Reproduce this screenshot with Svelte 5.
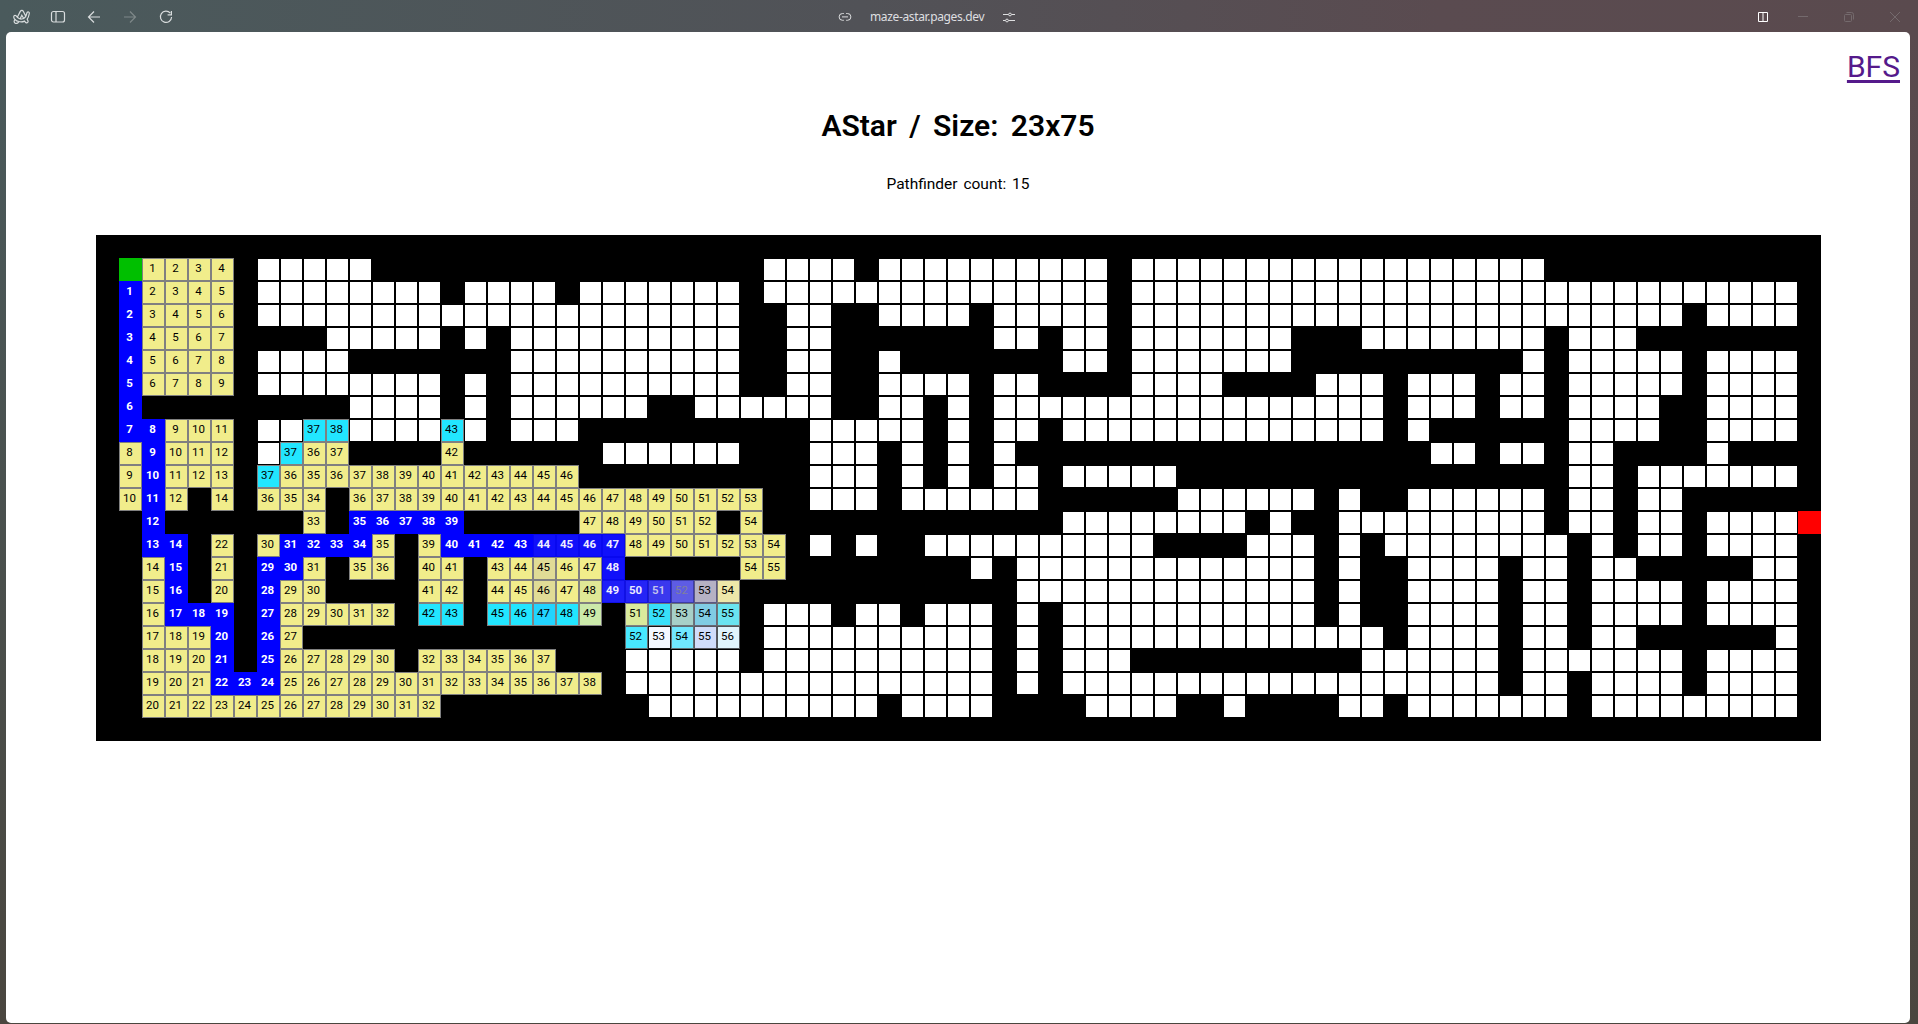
<script>
  // Each row lists runs as "column:content".
  // oN = N open cells, g = start, x = goal, plain numbers = visited distances,
  // b = current path, c = frontier. "a~b" expands to a consecutive range.
  const rows = [
    '',
    '1:g 2:1~4 7:o5 29:o4 34:o10 45:o18',
    '1:b1 2:2~5 7:o8 16:o4 21:o7 29:o15 45:o29',
    '1:b2 2:3~6 7:o21 30:o2 34:o4 39:o5 45:o24 70:o4',
    '1:b3 2:4~7 10:o5 16:o1 18:o10 30:o2 39:o2 42:o2 45:o7 55:o8 64:o3',
    '1:b4 2:5~8 7:o4 18:o10 30:o2 34:o1 42:o2 45:o7 62:o1 64:o5 70:o4',
    '1:b5 2:6~9 7:o8 16:o1 18:o10 30:o2 34:o4 39:o2 45:o4 53:o3 57:o3 61:o2 64:o5 70:o4',
    '1:b6 11:o4 16:o1 18:o6 26:o6 34:o2 37:o1 39:o17 57:o3 61:o2 64:o4 70:o4',
    '1:b7~8 3:9~11 7:o2 9:c37~38 11:o4 15:c43 16:o1 18:o3 31:o5 37:o1 39:o2 42:o14 57:o1 64:o4 70:o4',
    '1:8 2:b9 3:10~12 7:o1 8:c37 9:36~37 15:42 22:o6 31:o3 35:o1 37:o1 39:o1 58:o2 61:o2 64:o2 70:o1',
    '1:9 2:b10 3:11~13 7:c37 8:36 9:35~46 31:o3 35:o1 37:o1 39:o2 42:o5 64:o2 67:o7',
    '1:10 2:b11 3:12 5:14 7:36 8:35 9:34 11:36~53 31:o3 35:o6 47:o6 54:o1 57:o6 64:o2 67:o2',
    '2:b12 9:33 11:b35~39 21:47~52 28:54 42:o8 51:o1 54:o9 64:o2 67:o2 70:o4 74:x',
    '2:b13~14 5:22 7:30 8:b31~34 12:35 14:39 15:b40~47 23:48~54 31:o1 33:o1 36:o10 50:o3 54:o1 56:o8 65:o1 67:o2 70:o4',
    '2:14 3:b15 5:21 7:b29~30 9:31 11:35~36 14:40~41 17:43~47 22:b48 28:54~55 38:o1 40:o13 54:o1 57:o4 62:o2 65:o2 72:o2',
    '2:15 3:b16 5:20 7:b28 8:29~30 14:41~42 17:44~48 22:b49~52 26:53~54 40:o13 54:o1 57:o4 62:o2 65:o4 70:o4',
    '2:16 3:b17~19 7:b27 8:28~32 14:c42~43 17:c45~48 21:49 23:51 24:c52~55 29:o3 33:o2 36:o3 40:o1 42:o11 54:o1 57:o4 62:o2 65:o4 70:o4',
    '2:17~19 5:b20 7:b26 8:27 23:c52~56 29:o10 40:o1 42:o14 57:o4 62:o2 65:o2 73:o1',
    '2:18~20 5:b21 7:b25 8:26~30 14:32~37 23:o5 29:o10 40:o1 42:o3 55:o6 62:o7 70:o4',
    '2:19~21 5:b22~24 8:25~38 23:o16 40:o1 42:o19 62:o2 65:o4 70:o4',
    '2:20~32 24:o10 35:o4 43:o4 49:o1 54:o2 57:o7 65:o9',
    ''
  ];

  // Cells caught halfway through their colour transition, keyed by "row,column".
  const fading = {
    '14,19': 'f1', '15,19': 'f1', '16,19': 'f2', '15,21': 'f3', '16,21': 'f4',
    '13,19': 'p0', '13,20': 'p0', '13,21': 'p0', '13,22': 'p0', '14,22': 'p0',
    '15,22': 'p1', '15,23': 'p2', '15,24': 'p3', '15,25': 'p4', '15,26': 'p5', '15,27': 'p6',
    '16,23': 'q1', '16,24': 'q2', '16,25': 'q3', '16,26': 'q4', '16,27': 'q5',
    '17,23': 'r1', '17,24': 'r2', '17,25': 'r3', '17,26': 'r4', '17,27': 'r5'
  };
  const kinds = { b: 'path', c: 'frontier' };

  function expand(spec, r) {
    const line = Array.from({ length: 75 }, () => ({ kind: 'wall', text: '' }));
    for (const part of spec.split(' ').filter(Boolean)) {
      const [at, body] = part.split(':');
      let c = +at;
      if (body === 'g') line[c].kind = 'start';
      else if (body === 'x') line[c].kind = 'goal';
      else if (body[0] === 'o') {
        for (let n = +body.slice(1); n > 0; n--) line[c++].kind = 'open';
      } else {
        const kind = kinds[body[0]] ?? 'seen';
        const [from, to] = body.replace(/^[bc]/, '').split('~').map(Number);
        for (let v = from; v <= (to ?? from); v++) line[c++] = { kind, text: v };
      }
    }
    return line.map((cell, c) => ({ ...cell, fade: fading[`${r},${c}`] ?? '' }));
  }

  const cells = rows.flatMap(expand);
</script>

<div class="window">
  <header class="bar">
    <div class="left">
      <svg width="18" height="16" viewBox="0 0 18 16"><path d="M2.2 14.2C.6 13.3 1 11.7 2 10.500C.6 9.200.3 7.200 1.500 6.500C2.900 5.800 3.600 7.200 4.300 8.200L7.300 2.400C8 .9 9.700.9 10.400 2.400L12.800 7.300C13.400 5.900 13.700 4.300 14.200 3.300C14.900 2.300 16.600 3 16.300 4.500C15.900 6.800 15.200 8.700 14.200 10.200L15 12C15.500 13.600 13.300 14.600 12.300 13.100L11.500 12.100C9.700 13 7.600 13.100 5.800 12.500C5.200 13.900 3.800 15 2.200 14.200ZM2 10.500C3 11.500 4.300 12.200 5.800 12.500M4.300 8.200C6.900 11.200 10.800 10.300 12.800 7.300M7.200 9.700L8.800 6.200L10.600 9.200"/></svg>
      <svg width="16" height="14" viewBox="0 0 16 14"><rect x="1.500" y="1.500" width="13" height="10.500" rx="2"/><path d="M6 1.500V12"/></svg>
      <svg width="14" height="14" viewBox="0 0 14 14"><path d="M13 7H1.500M7 1.500L1.500 7L7 12.500"/></svg>
      <svg class="dim" width="14" height="14" viewBox="0 0 14 14"><path d="M1 7H12.500M7 1.500L12.500 7L7 12.500"/></svg>
      <svg width="14" height="14" viewBox="0 0 14 14"><path d="M12.600 7A5.600 5.600 0 1 1 11.300 3.200M12.400 1V4.800H8.600"/></svg>
    </div>
    <div class="address">
      <svg width="14" height="10" viewBox="0 0 14 10"><path d="M5.800 1.500H4.500a3.300 3.300 0 0 0 0 6.800H5.800M8.200 1.500H9.500a3.300 3.300 0 0 1 0 6.800H8.200M4 4.900H10"/></svg>
      <span>maze-astar.pages.dev</span>
      <svg width="14" height="12" viewBox="0 0 14 12"><path d="M1 3.500H6.500M9.500 3.500H13M1 9.500H3.500M6.500 9.500H13"/><circle cx="8" cy="3.500" r="1.400"/><circle cx="5" cy="9.500" r="1.400"/></svg>
    </div>
    <div class="right">
      <svg class="split" width="10" height="10" viewBox="0 0 10 10"><path d="M.5.5H9.500V9.500H.5ZM5 .5V9.500"/></svg>
      <svg class="ctl" width="10" height="10" viewBox="0 0 10 10"><path d="M0 4.500H10"/></svg>
      <svg class="ctl" width="10" height="10" viewBox="0 0 10 10"><rect x=".5" y="2.500" width="7" height="7" rx="1"/><path d="M2.500.5H7.500Q9.500.5 9.500 2.500V7.500"/></svg>
      <svg class="ctl" width="10" height="10" viewBox="0 0 10 10"><path d="M0 0L10 10M10 0L0 10"/></svg>
    </div>
  </header>
  <main class="page">
    <nav><a href="#bfs">BFS</a></nav>
    <h1>AStar / Size: 23x75</h1>
    <p>Pathfinder count: 15</p>
    <div class="maze">
      {#each cells as cell}
        <div class="cell {cell.kind} {cell.fade}">{cell.text}</div>
      {/each}
    </div>
  </main>
</div>

<style>
  .window {
    box-sizing: border-box;
    height: 1024px;
    padding-bottom: 1px;
    display: flex;
    flex-direction: column;
    overflow: hidden;
    background:
      linear-gradient(to bottom, transparent 3%, #4a463f 100%),
      linear-gradient(to right, #4a5a5c 0%, #515257 45%, #5a4b50 75%, #5a4a4e 100%);
    font-family: Roboto, 'Noto Sans', sans-serif;
  }
  .bar {
    height: 32px;
    flex: none;
    display: grid;
    grid-template-columns: 838px auto 1fr;
    align-items: center;
    padding-top: 1px;
    box-sizing: border-box;
    color: #d8dcdd;
  }
  svg {
    fill: none;
    stroke: currentColor;
    stroke-width: 1.2;
    display: block;
  }
  .left {
    display: grid;
    grid-template-columns: repeat(5, 36px);
    place-items: center;
    padding-left: 4px;
  }
  .left .dim {
    color: #7f8889;
  }
  .address {
    display: flex;
    align-items: center;
    gap: 18px;
    font: 12px/16px 'Noto Sans', sans-serif;
    letter-spacing: -0.35px;
    color: #dedfe0;
  }
  .address svg {
    stroke-width: 1;
  }
  .right {
    display: grid;
    grid-template-columns: 34px repeat(3, 46px);
    justify-content: end;
    place-items: center;
  }
  .right svg {
    stroke-width: 1;
  }
  .split {
    color: #fff;
  }
  .ctl {
    color: #746a6d;
  }
  .page {
    flex: 1;
    margin: 0 8px 0 6px;
    display: flex;
    flex-direction: column;
    align-items: center;
    background: #fff;
    border-radius: 5px;
    color: #000;
  }
  nav {
    align-self: flex-end;
    height: 60px;
    padding: 13px 10px 0 0;
    box-sizing: border-box;
  }
  a {
    font-size: 30px;
    line-height: 44px;
    color: #551a8b;
    text-decoration: underline;
    text-decoration-thickness: 3px;
    text-underline-offset: 3px;
  }
  h1 {
    margin: 14px 0 0;
    font-size: 30px;
    line-height: 40px;
    font-weight: 600;
    word-spacing: 5px;
  }
  p {
    margin: 26px 0 0;
    font-size: 15.5px;
    line-height: 24px;
    word-spacing: 2px;
  }
  .maze {
    margin-top: 39px;
    display: grid;
    grid-template-columns: repeat(75, 23px);
    grid-auto-rows: 23px;
    background: #000;
  }
  .cell {
    box-sizing: border-box;
    border: 1px solid #000;
    text-align: center;
    font-size: 11.5px;
    line-height: 19px;
    padding-right: 1px;
  }
  .open { background: #fff; }
  .start { background: #00bf00; border-color: #00bf00; }
  .goal { background: #f00; border-color: #f00; }
  .seen { background: #f1ed8b; border-color: #808080; }
  .frontier { background: #22e6ff; border-color: #808080; }
  .path { background: #00f; border-color: #00f; color: #fff; font-weight: 700; }

  .f1 { background: #e0dc96; }
  .f2 { background: #22d4ff; }
  .f3 { background: #e0e896; }
  .f4 { background: #cceaaa; }
  .p0 { background: #1010fa; border-color: #0808f0; color: #eeeeff; }
  .p1 { background: #1e1ef8; border-color: #1010e8; color: #eeeeff; }
  .p2 { background: #2424f6; border-color: #1212e0; color: #e8e8ff; }
  .p3 { background: #3a38ee; border-color: #2020c8; color: #c4c4ec; font-weight: 600; }
  .p4 { background: #5e5ce4; border-color: #3c3ca8; color: #80809c; font-weight: 400; }
  .p5 { background: #b5b1c4; border-color: #5c5884; }
  .p6 { background: #ede7a9; border-color: #7c7a76; }
  .q1 { background: #d9ea9c; }
  .q2 { background: #38e0fa; border-color: #70787c; }
  .q3 { background: #a7d0c8; border-color: #6c7478; }
  .q4 { background: #80cce4; border-color: #686878; }
  .q5 { background: #6ae4f0; border-color: #6c7474; }
  .r1 { background: #48e8ff; border-color: #607074; }
  .r2 { background: #f4f8ff; border-color: #101010; }
  .r3 { background: #70e8ff; border-color: #607074; }
  .r4 { background: #d0dcfa; border-color: #585860; }
  .r5 { background: #e0f4fc; border-color: #505458; }
</style>
